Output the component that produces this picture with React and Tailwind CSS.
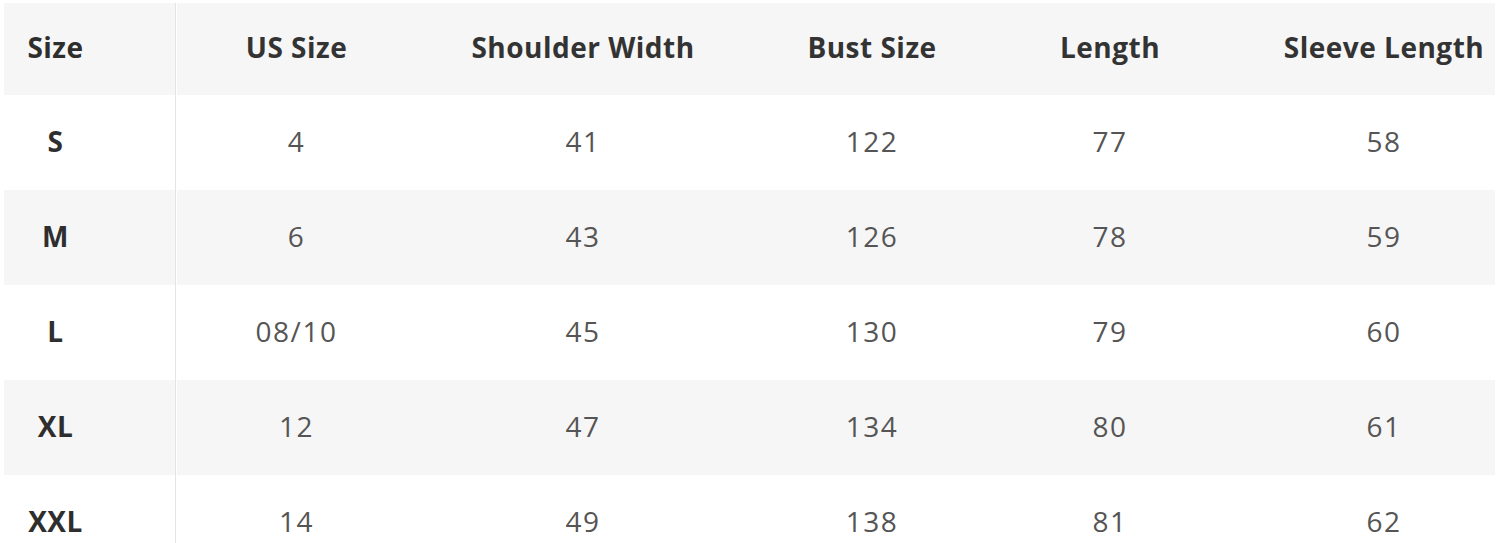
import React from "react";

const headers = ["Size", "US Size", "Shoulder Width", "Bust Size", "Length", "Sleeve Length"];
const rows = [
  ["S", "4", "41", "122", "77", "58"],
  ["M", "6", "43", "126", "78", "59"],
  ["L", "08/10", "45", "130", "79", "60"],
  ["XL", "12", "47", "134", "80", "61"],
  ["XXL", "14", "49", "138", "81", "62"],
];

function Row({ cells, header, gray }) {
  return (
    <div
      className={
        "grid grid-cols-[172px_240px_334px_244px_232px_316px] items-center " +
        (header ? "h-[92px] " : "h-[95px] ") +
        (gray ? "bg-[#f6f6f6]" : "bg-white")
      }
    >
      {cells.map((c, i) => (
        <div
          key={i}
          className={
            "h-full flex items-center justify-center whitespace-nowrap text-[28px] pb-[4px] " +
            (i === 0
              ? "pr-[68px] font-bold tracking-[0.5px] text-[#2e2e2e] border-r border-[#e4e4e4] "
              : header
              ? "font-bold tracking-[0.5px] text-[#333333] "
              : "tracking-[1.5px] text-[#555555] ") +
            (i === 1 ? "border-l border-white" : "")
          }
        >
          {c}
        </div>
      ))}
    </div>
  );
}

export default function App() {
  return (
    <div
      className="w-[1500px] h-[543px] bg-white overflow-hidden pt-[3px] pl-[4px]"
      style={{ fontFamily: '"Open Sans", "Noto Sans", sans-serif' }}
    >
      <div className="w-[1491px] overflow-hidden">
        <Row cells={headers} header gray />
        {rows.map((r, i) => (
          <Row key={i} cells={r} gray={i % 2 === 1} />
        ))}
      </div>
    </div>
  );
}
